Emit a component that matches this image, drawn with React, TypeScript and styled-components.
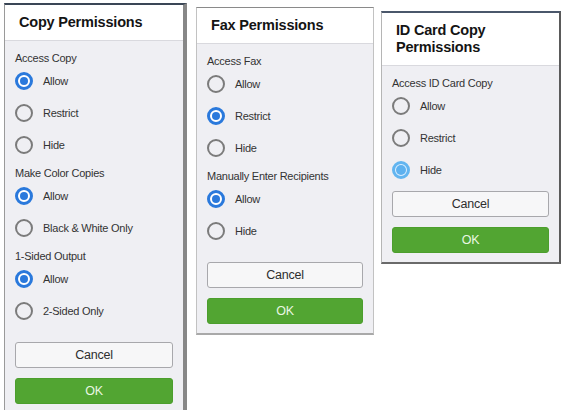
import React from "react";
import styled, { createGlobalStyle, css } from "styled-components";

const Global = createGlobalStyle`
  html, body { margin: 0; padding: 0; background: #ffffff; }
  body { font-family: "Liberation Sans", Arial, Helvetica, sans-serif; }
`;

const Page = styled.div`
  width: 564px;
  height: 410px;
  overflow: hidden;
  box-sizing: border-box;
  padding-left: 4px;
  display: flex;
  align-items: flex-start;
  background: #ffffff;
`;

type Frame = "left" | "middle" | "right";

const Dialog = styled.section<{ $top: number; $gap: number; $frame: Frame; $width: number }>`
  flex: none;
  width: ${(p) => p.$width}px;
  margin-top: ${(p) => p.$top}px;
  margin-left: ${(p) => p.$gap}px;
  background: #efeff3;
  display: flex;
  flex-direction: column;
  ${(p) =>
    p.$frame === "left" &&
    css`
      border-top: 2px solid #3a4656;
      border-left: 1px solid #9a9a9a;
      border-right: 4px solid #878787;
    `}
  ${(p) =>
    p.$frame === "middle" &&
    css`
      border: 1px solid #c2c2c2;
      border-top-color: #8a8a8a;
      border-bottom: 2px solid #a9a9a9;
    `}
  ${(p) =>
    p.$frame === "right" &&
    css`
      border-top: 2px solid #4a576b;
      border-left: 1px solid #b5b5b5;
      border-right: 2px solid #5a5a5a;
      border-bottom: 2px solid #6a6a6a;
    `}
`;

const Header = styled.header`
  background: #ffffff;
  padding: 9px 14px;
  border-bottom: 1px solid #d9d9de;
`;

const Title = styled.h2`
  margin: 0;
  font-size: 14.5px;
  line-height: 17px;
  font-weight: 700;
  letter-spacing: -0.2px;
  color: #141414;
`;

const Body = styled.div`
  padding: 10px 10px 9px;
  display: flex;
  flex-direction: column;
`;

const Group = styled.div`
  display: flex;
  flex-direction: column;
  & + & {
    margin-top: 5px;
  }
`;

const GroupLabel = styled.div`
  font-size: 11px;
  line-height: 14px;
  letter-spacing: -0.25px;
  color: #333333;
`;

const Option = styled.div`
  height: 32px;
  display: flex;
  align-items: center;
  gap: 10px;
  font-size: 11px;
  letter-spacing: -0.25px;
  color: #333333;
`;

type RadioState = "off" | "on" | "focus";

const Circle = styled.span<{ $state: RadioState }>`
  flex: none;
  width: 18px;
  height: 18px;
  box-sizing: border-box;
  border-radius: 50%;
  display: flex;
  align-items: center;
  justify-content: center;
  ${(p) =>
    p.$state === "off" &&
    css`
      border: 2px solid #7b7b7b;
      background: #efeff3;
    `}
  ${(p) =>
    p.$state === "on" &&
    css`
      border: 3px solid #2a79dc;
      background: #ffffff;
      &::after {
        content: "";
        width: 8px;
        height: 8px;
        border-radius: 50%;
        background: #2a79dc;
      }
    `}
  ${(p) =>
    p.$state === "focus" &&
    css`
      border: 3px solid #62b5f0;
      background: #dcefff;
      &::after {
        content: "";
        width: 10px;
        height: 10px;
        border-radius: 50%;
        background: #5db1ef;
      }
    `}
`;

const Actions = styled.div<{ $space: number }>`
  margin-top: ${(p) => p.$space}px;
  display: flex;
  flex-direction: column;
  gap: 10px;
`;

const Button = styled.button<{ $primary?: boolean }>`
  height: 26px;
  width: 100%;
  box-sizing: border-box;
  border-radius: 3px;
  font-family: "Liberation Sans", Arial, Helvetica, sans-serif;
  font-size: 12.5px;
  letter-spacing: -0.2px;
  padding: 0;
  cursor: pointer;
  ${(p) =>
    p.$primary
      ? css`
          background: #52a532;
          border: 1px solid #4c9e2d;
          color: #e9f7e2;
        `
      : css`
          background: #f7f7f8;
          border: 1px solid #a8a8ac;
          color: #2e2e2e;
        `}
`;

type Opt = { label: string; state: RadioState };
type Sec = { label: string; options: Opt[] };

interface PanelProps {
  title: string;
  sections: Sec[];
  frame: Frame;
  top: number;
  gap: number;
  width: number;
  actionsSpace: number;
}

function Panel({ title, sections, frame, top, gap, width, actionsSpace }: PanelProps) {
  return (
    <Dialog $frame={frame} $top={top} $gap={gap} $width={width}>
      <Header>
        <Title>{title}</Title>
      </Header>
      <Body>
        {sections.map((s) => (
          <Group key={s.label}>
            <GroupLabel>{s.label}</GroupLabel>
            {s.options.map((o) => (
              <Option key={o.label}>
                <Circle $state={o.state} />
                <span>{o.label}</span>
              </Option>
            ))}
          </Group>
        ))}
        <Actions $space={actionsSpace}>
          <Button>Cancel</Button>
          <Button $primary>OK</Button>
        </Actions>
      </Body>
    </Dialog>
  );
}

export default function App() {
  return (
    <>
      <Global />
      <Page>
        <Panel
          title="Copy Permissions"
          frame="left"
          top={3}
          gap={0}
          width={178}
          actionsSpace={15}
          sections={[
            {
              label: "Access Copy",
              options: [
                { label: "Allow", state: "on" },
                { label: "Restrict", state: "off" },
                { label: "Hide", state: "off" },
              ],
            },
            {
              label: "Make Color Copies",
              options: [
                { label: "Allow", state: "on" },
                { label: "Black & White Only", state: "off" },
              ],
            },
            {
              label: "1-Sided Output",
              options: [
                { label: "Allow", state: "on" },
                { label: "2-Sided Only", state: "off" },
              ],
            },
          ]}
        />
        <Panel
          title="Fax Permissions"
          frame="middle"
          top={7}
          gap={9}
          width={176}
          actionsSpace={15}
          sections={[
            {
              label: "Access Fax",
              options: [
                { label: "Allow", state: "off" },
                { label: "Restrict", state: "on" },
                { label: "Hide", state: "off" },
              ],
            },
            {
              label: "Manually Enter Recipients",
              options: [
                { label: "Allow", state: "on" },
                { label: "Hide", state: "off" },
              ],
            },
          ]}
        />
        <Panel
          title="ID Card Copy Permissions"
          frame="right"
          top={11}
          gap={7}
          width={177}
          actionsSpace={5}
          sections={[
            {
              label: "Access ID Card Copy",
              options: [
                { label: "Allow", state: "off" },
                { label: "Restrict", state: "off" },
                { label: "Hide", state: "focus" },
              ],
            },
          ]}
        />
      </Page>
    </>
  );
}
